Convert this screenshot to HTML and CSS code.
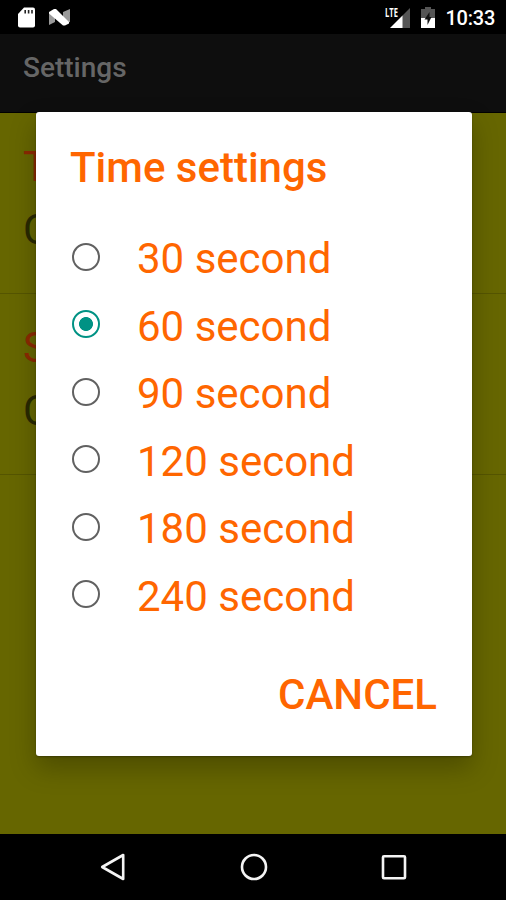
FILE: index.html
```html
<!DOCTYPE html>
<html lang="en">
<head>
<meta charset="utf-8">
<title>Settings</title>
<link rel="stylesheet" href="styles.css">
</head>
<body>
<div class="screen">
  <header class="status">
    <svg class="sd" width="17" height="21" viewBox="0 0 17 21"><path fill="#fff" d="M6 .5H15a2 2 0 0 1 2 2v16a2 2 0 0 1-2 2H2a2 2 0 0 1-2-2V7z"/><path stroke="#222" stroke-width="1.6" d="M7.2 3v3.5M10.6 3v3.5M14 3v3.5"/></svg>
    <svg class="nougat" width="21" height="17" viewBox="0 0 21 17"><path fill="#999" d="M0 3h6v10l-6 3zM14 3l7-3v13l-7 2z"/><path fill="#fff" d="M0 3L5 0H7L20 13V14.5L16 16.5H14L0 4.5z"/></svg>
    <div class="signal">
      <span class="lte">LTE</span>
      <svg width="20" height="20" viewBox="0 0 20 20"><path fill="#555" d="M20 0v20h-8V8z"/><path fill="#fff" d="M12.5 7.5V20H0z"/></svg>
    </div>
    <svg class="battery" width="14" height="21" viewBox="0 0 14 21"><path fill="#555" d="M4 0h6v2h4v9H0V2h4z"/><path fill="#fff" d="M0 11h14v10H0z"/><path fill="#111" d="M8.5 5L3.5 12.5H6.5V18l4-8H8.5z"/></svg>
    <span class="clock">10:33</span>
  </header>
  <div class="appbar">Settings</div>
  <main class="content">
    <section class="pref"><div class="pref-title">T</div><div class="pref-summary">C</div></section>
    <section class="pref"><div class="pref-title">S</div><div class="pref-summary">C</div></section>
  </main>
  <nav class="nav">
    <svg width="28" height="30" viewBox="0 0 28 30"><path d="M24.2 3v24L3.2 15z"/></svg>
    <svg width="28" height="30" viewBox="0 0 28 30"><circle cx="14" cy="15" r="12"/></svg>
    <svg width="28" height="30" viewBox="0 0 28 30"><rect x="3" y="4.3" width="22" height="22" rx="1"/></svg>
  </nav>
  <div class="dialog" role="dialog">
    <h1 class="title">Time settings</h1>
    <ul class="options">
      <li class="option"><span class="radio"></span><span class="label">30 second</span></li>
      <li class="option"><span class="radio checked"></span><span class="label">60 second</span></li>
      <li class="option"><span class="radio"></span><span class="label">90 second</span></li>
      <li class="option"><span class="radio"></span><span class="label">120 second</span></li>
      <li class="option"><span class="radio"></span><span class="label">180 second</span></li>
      <li class="option"><span class="radio"></span><span class="label">240 second</span></li>
    </ul>
    <div class="cancel">CANCEL</div>
  </div>
</div>
</body>
</html>
```
FILE: styles.css
```css
* { box-sizing: border-box; }
body { margin: 0; font-family: Roboto, sans-serif; background: #000; }
.screen { position: relative; width: 506px; height: 900px; display: flex; flex-direction: column; overflow: hidden; background: #666600; }
.status { height: 34px; background: #000; display: flex; align-items: flex-start; padding: 7px 11px 0 18px; flex: none; }
.nougat { margin: 2px 0 0 14px; }
.signal { display: flex; position: relative; margin: 1px 0 0 auto; }
.lte { position: absolute; left: -5px; top: -2px; font: 700 13px/13px "Open Sans", sans-serif; color: #fff; transform: scaleX(.58); transform-origin: left; }
.battery { margin-left: 11px; }
.clock { margin-left: 11px; color: #fff; font-weight: 500; font-size: 20px; line-height: 23px; letter-spacing: -.25px; }
.appbar { height: 79px; flex: none; background: #0e0e0e; color: #666; font-weight: 500; font-size: 28px; line-height: 68px; padding-left: 23px; border-bottom: 1px solid #000; }
.content { flex: 1; }
.pref { height: 181px; padding: 29px 0 0 23px; border-bottom: 1px solid #555500; }
.pref-title { font-size: 42px; line-height: 50px; color: #8c2a00; }
.pref-summary { font-size: 42px; line-height: 50px; margin-top: 13px; color: #292900; }
.nav { height: 66px; flex: none; background: #000; display: flex; justify-content: center; gap: 112.5px; padding: 18px 0 0 1px; }
.nav svg { fill: none; stroke: #f4f4f4; stroke-width: 2.6; stroke-linejoin: round; }
.dialog { position: absolute; left: 35.5px; top: 111.5px; width: 436px; height: 644px; background: #fff; border-radius: 3px; box-shadow: 0 12px 26px rgba(0,0,0,.25), 0 1px 2px rgba(0,0,0,.3); color: #ff6600; padding: 31.5px 34.5px 0; }
.title { margin: 0; font-weight: 500; font-size: 42px; line-height: 50px; white-space: nowrap; }
.options { list-style: none; margin: 32px 0 0; padding: 0; }
.option { display: flex; align-items: center; height: 67.5px; }
.radio { width: 28px; height: 28px; margin: 0 37px 0 2px; border: 2.5px solid #616161; border-radius: 50%; flex: none; position: relative; top: -2px; }
.checked { border-color: #009284; background: radial-gradient(circle, #009284 6.6px, transparent 7.3px); }
.label { font-size: 42px; line-height: 50px; white-space: nowrap; position: relative; top: .5px; }
.cancel { text-align: right; font-weight: 500; font-size: 42px; line-height: 50px; margin-top: 40px; }
```
